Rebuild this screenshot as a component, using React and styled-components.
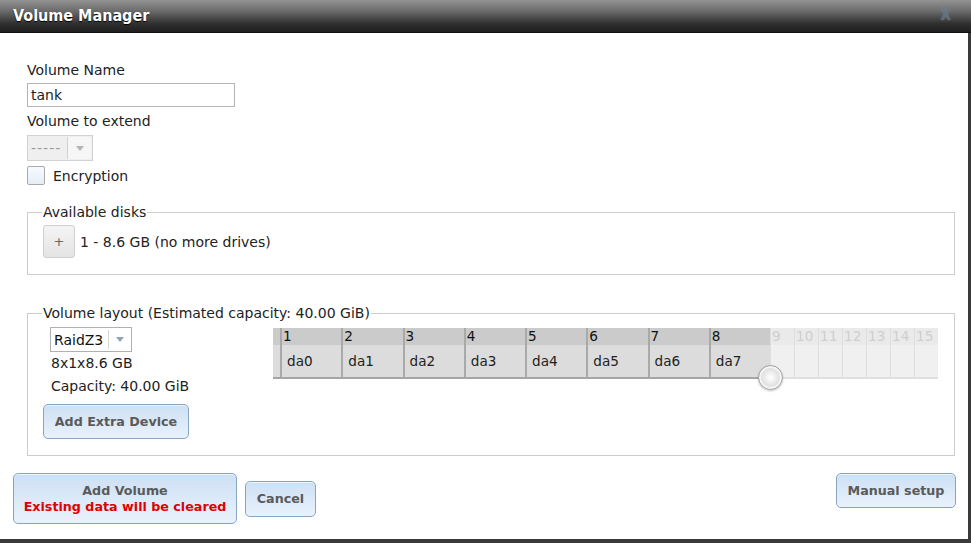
import React from 'react'
import styled, { createGlobalStyle } from 'styled-components'

const GlobalStyle = createGlobalStyle`
  * {
    box-sizing: border-box;
  }
  body {
    margin: 0;
    background: #fff;
    font-family: "DejaVu Sans", Verdana, sans-serif;
    font-size: 14px;
    color: #222;
  }
`

const Window = styled.div`
  width: 971px;
  height: 543px;
  display: flex;
  flex-direction: column;
  overflow: hidden;
`

const TitleBar = styled.div`
  height: 33px;
  flex: none;
  display: flex;
  align-items: center;
  justify-content: space-between;
  padding: 0 20px 2px 13px;
  background: linear-gradient(#939393 0%, #6a6a6a 35%, #2e2e2e 75%, #1f1f1f 100%);
  border-bottom: 1px solid #111;
`

const Title = styled.span`
  font-family: "DejaVu Sans Condensed", "DejaVu Sans", sans-serif;
  font-stretch: condensed;
  font-weight: bold;
  font-size: 16px;
  color: #fff;
  text-shadow: 0 1px 1px #000;
`

const Close = styled.span`
  font-family: "DejaVu Sans Condensed", "DejaVu Sans", sans-serif;
  font-stretch: condensed;
  font-weight: bold;
  font-size: 15px;
  color: #66778a;
  opacity: 0.8;
  text-shadow: 0 0 2px rgba(150, 170, 190, 0.6);
`

const Body = styled.div`
  flex: 1;
  display: flex;
  flex-direction: column;
  border-right: 3px solid #3a3a3a;
  border-bottom: 4px solid #3a3a3a;
  padding: 29px 13px 0 27px;
`

const Label = styled.div`
  line-height: 16px;
  margin-top: ${p => p.$gap || 0}px;
`

const TextInput = styled.input`
  width: 208px;
  height: 24px;
  margin-top: 5px;
  border: 1px solid #b4b4b4;
  padding: 0 4px 0 3px;
  font-family: inherit;
  font-size: 14px;
  color: #222;
  outline: none;
`

const Select = styled.div`
  display: flex;
  width: ${p => p.$width}px;
  height: ${p => p.$height}px;
  margin-top: ${p => p.$top || 0}px;
  margin-left: ${p => p.$left || 0}px;
  border: 1px solid ${p => (p.$disabled ? '#d2d2d2' : '#b0b0b0')};
  background: ${p => (p.$disabled ? '#efefef' : '#fff')};
`

const SelectValue = styled.div`
  flex: 1;
  display: flex;
  align-items: center;
  padding-left: 3px;
  color: ${p => (p.$disabled ? '#9a9a9a' : '#111')};
  letter-spacing: ${p => (p.$disabled ? '1px' : '0')};
`

const SelectArrow = styled.div`
  width: ${p => p.$width}px;
  display: flex;
  align-items: center;
  justify-content: center;
  border-left: 1px solid ${p => (p.$disabled ? '#d2d2d2' : '#d8d8d8')};
  background: ${p => (p.$disabled ? '#f6f6f6' : '#fff')};
  margin: ${p => (p.$disabled ? '1px' : '2px 0')};
  &::after {
    content: '';
    border-left: 4px solid transparent;
    border-right: 4px solid transparent;
    border-top: 5px solid ${p => (p.$disabled ? '#b5b5b5' : '#8ea4bf')};
  }
`

const CheckRow = styled.label`
  display: flex;
  align-items: center;
  gap: 8px;
  margin-top: 5px;
  line-height: 16px;
`

const CheckBox = styled.span`
  width: 18px;
  height: 19px;
  border: 1px solid #a9a9a9;
  border-radius: 2px;
  background: linear-gradient(#f8fafd, #e6edf6);
`

const Fieldset = styled.fieldset`
  margin: ${p => p.$top}px 0 0 0;
  border: 1px solid #cdcdcd;
  padding: ${p => p.$padTop}px 15px ${p => p.$padBottom}px 15px;
  min-width: 0;
`

const Legend = styled.legend`
  padding: 0 1px;
  line-height: 16px;
  margin-left: -1px;
`

const DiskRow = styled.div`
  display: flex;
  align-items: center;
  gap: 5px;
`

const PlusButton = styled.button`
  width: 32px;
  height: 33px;
  border: 1px solid #cfcfcf;
  border-radius: 3px;
  background: linear-gradient(#f4f4f4, #e4e4e4);
  color: #666;
  font-family: inherit;
  font-size: 13px;
  padding: 0;
`

const LayoutRow = styled.div`
  display: flex;
  align-items: flex-start;
`

const LayoutSide = styled.div`
  width: 230px;
  flex: none;
  display: flex;
  flex-direction: column;
`

const Info = styled.div`
  margin-left: 8px;
  line-height: 16px;
  margin-top: ${p => p.$top}px;
`

const BlueButton = styled.button`
  font-family: inherit;
  font-size: 12.7px;
  font-weight: bold;
  color: #5a5a5a;
  line-height: 16px;
  border: 1px solid #86a5c2;
  border-radius: 5px;
  background: linear-gradient(#cde0f4, #e9f2fc);
  box-shadow: inset 0 1px 0 rgba(255, 255, 255, 0.6);
  padding: 0;
  width: ${p => p.$width}px;
  height: ${p => p.$height}px;
  margin-top: ${p => p.$top || 0}px;
  align-self: ${p => p.$self || 'auto'};
  flex: none;
`

const Warning = styled.span`
  display: block;
  color: #e00000;
`

const Grid = styled.div`
  position: relative;
  display: flex;
  margin-top: 1px;
  font-size: 13.6px;
`

const GridStrip = styled.div`
  width: 7px;
  display: flex;
  flex-direction: column;
  border-bottom: 2px solid #a5a5a5;
`

const Column = styled.div`
  width: ${p => (p.$active ? 61.25 : 24)}px;
  display: flex;
  flex-direction: column;
  border-left: ${p => (p.$active ? '2px solid #a9a9a9' : '1px solid #dedede')};
  border-bottom: 2px solid ${p => (p.$active ? '#a5a5a5' : '#e0e0e0')};
`

const HeadCell = styled.div`
  height: 17px;
  line-height: 17px;
  padding-left: 1px;
  background: ${p => (p.$active ? '#cbcbcb' : '#eaeaea')};
  color: ${p => (p.$active ? '#111' : '#cfcfcf')};
`

const BodyCell = styled.div`
  height: 32px;
  line-height: 32px;
  padding-left: 5px;
  background: ${p => (p.$active ? '#dcdcdc' : '#f0f0f0')};
`

const Handle = styled.div`
  position: absolute;
  left: 485px;
  top: 37px;
  width: 25px;
  height: 25px;
  border-radius: 50%;
  border: 1px solid #a3a3a3;
  background: radial-gradient(circle at 50% 50%, #ffffff 0%, #e6e6e6 45%, #c9c9c9 100%);
  box-shadow: 0 1px 2px rgba(0, 0, 0, 0.25), inset 0 0 0 2px #f4f4f4;
`

const Footer = styled.div`
  display: flex;
  align-items: center;
  gap: 8px;
  margin: 17px -1px 0 -14px;
`

const Spacer = styled.div`
  flex: 1;
`

const disks = Array.from({ length: 15 }, (_, i) => ({
  n: i + 1,
  name: i < 8 ? `da${i}` : ''
}))

export default function App() {
  return (
    <Window>
      <GlobalStyle />
      <TitleBar>
        <Title>Volume Manager</Title>
        <Close>X</Close>
      </TitleBar>
      <Body>
        <Label>Volume Name</Label>
        <TextInput defaultValue="tank" />
        <Label $gap={6}>Volume to extend</Label>
        <Select $width={66} $height={26} $top={6} $disabled>
          <SelectValue $disabled>-----</SelectValue>
          <SelectArrow $width={24} $disabled />
        </Select>
        <CheckRow>
          <CheckBox />
          Encryption
        </CheckRow>

        <Fieldset $top={19} $padTop={5} $padBottom={16}>
          <Legend>Available disks</Legend>
          <DiskRow>
            <PlusButton>+</PlusButton>
            1 - 8.6 GB (no more drives)
          </DiskRow>
        </Fieldset>

        <Fieldset $top={30} $padTop={6} $padBottom={16}>
          <Legend>Volume layout (Estimated capacity: 40.00 GiB)</Legend>
          <LayoutRow>
            <LayoutSide>
              <Select $width={82} $height={25} $left={7}>
                <SelectValue>RaidZ3</SelectValue>
                <SelectArrow $width={23} />
              </Select>
              <Info $top={3}>8x1x8.6 GB</Info>
              <Info $top={7}>Capacity: 40.00 GiB</Info>
              <BlueButton $width={146} $height={35} $top={10}>Add Extra Device</BlueButton>
            </LayoutSide>
            <Grid>
              <GridStrip>
                <HeadCell $active />
                <BodyCell $active />
              </GridStrip>
              {disks.map(d => {
                const active = d.n <= 8
                return (
                  <Column key={d.n} $active={active}>
                    <HeadCell $active={active}>{d.n}</HeadCell>
                    <BodyCell $active={active}>{d.name}</BodyCell>
                  </Column>
                )
              })}
              <Handle />
            </Grid>
          </LayoutRow>
        </Fieldset>

        <Footer>
          <BlueButton $width={224} $height={51}>
            Add Volume
            <Warning>Existing data will be cleared</Warning>
          </BlueButton>
          <BlueButton $width={71} $height={36}>Cancel</BlueButton>
          <Spacer />
          <BlueButton $width={120} $height={35} $self="flex-start">Manual setup</BlueButton>
        </Footer>
      </Body>
    </Window>
  )
}
